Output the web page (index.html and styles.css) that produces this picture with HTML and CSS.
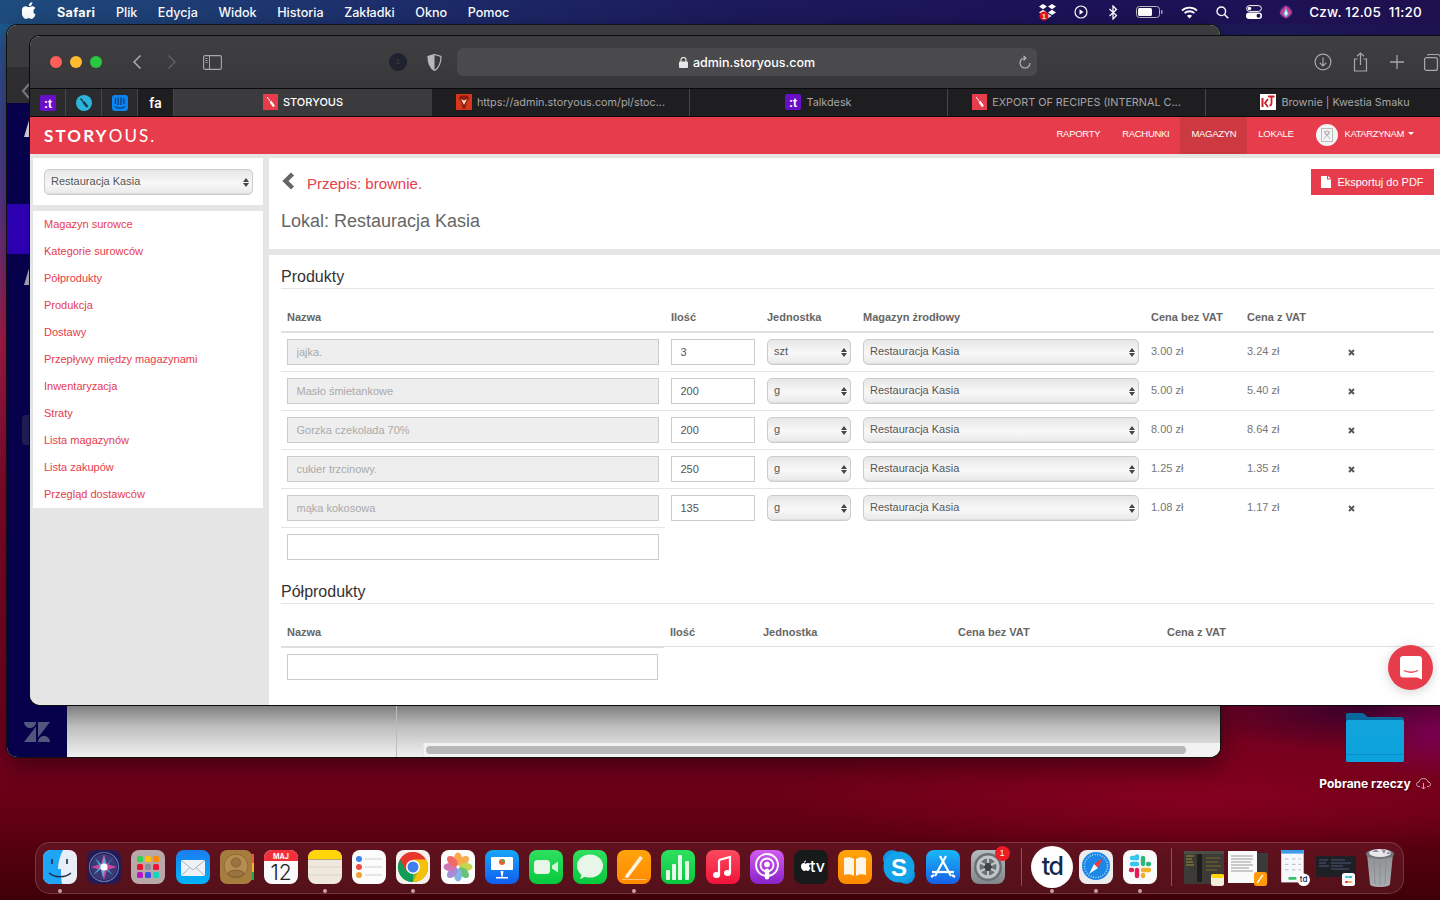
FILE: index.html
```html
<!DOCTYPE html>
<html lang="pl">
<head>
<meta charset="utf-8">
<title>Storyous</title>
<link rel="stylesheet" href="styles.css">
</head>
<body>
<svg class="defs" aria-hidden="true">
  <defs>
    <linearGradient id="gBlue" x1="0" y1="0" x2="0" y2="1"><stop offset="0" stop-color="#1b7df0"/><stop offset="1" stop-color="#00b4fb"/></linearGradient>
    <linearGradient id="gKey" x1="0" y1="0" x2="0" y2="1"><stop offset="0" stop-color="#19a6f8"/><stop offset="1" stop-color="#0f5ef0"/></linearGradient>
    <linearGradient id="gGreen" x1="0" y1="0" x2="0" y2="1"><stop offset="0" stop-color="#2fe05f"/><stop offset="1" stop-color="#06c83c"/></linearGradient>
    <linearGradient id="gOrange" x1="0" y1="0" x2="0" y2="1"><stop offset="0" stop-color="#ffa30c"/><stop offset="1" stop-color="#ff8a00"/></linearGradient>
    <linearGradient id="gRed" x1="0" y1="0" x2="0" y2="1"><stop offset="0" stop-color="#fc4a5e"/><stop offset="1" stop-color="#f2123a"/></linearGradient>
    <linearGradient id="gPod" x1="0" y1="0" x2="0" y2="1"><stop offset="0" stop-color="#d45bf3"/><stop offset="1" stop-color="#8a23c8"/></linearGradient>
    <linearGradient id="gGrey" x1="0" y1="0" x2="0" y2="1"><stop offset="0" stop-color="#b5bcc0"/><stop offset="1" stop-color="#80878b"/></linearGradient>
    <linearGradient id="gApp" x1="0" y1="0" x2="0" y2="1"><stop offset="0" stop-color="#18b8f5"/><stop offset="1" stop-color="#1760e8"/></linearGradient>
    <linearGradient id="gTrash" x1="0" y1="0" x2="0" y2="1"><stop offset="0" stop-color="#8d9194"/><stop offset="1" stop-color="#a9adb0"/></linearGradient>
    <linearGradient id="gFolder" x1="0" y1="0" x2="0" y2="1"><stop offset="0" stop-color="#13a5dc"/><stop offset="1" stop-color="#0ba2dd"/></linearGradient>
  </defs>
</svg>

<div class="desktop">
  <header class="menubar">
    <svg class="apple" width="14" height="17" viewBox="0 0 14 17"><path fill="#fff" d="M10.4 0c.1 1.1-.3 2.1-.9 2.9-.7.8-1.7 1.3-2.6 1.2-.1-1 .4-2.1 1-2.8C8.500.6 9.600.1 10.400 0zM13.500 12.500c-.4 1-.6 1.400-1.100 2.200-.7 1.100-1.700 2.300-2.900 2.300-1.100 0-1.400-.7-2.800-.7s-1.800.7-2.900.7c-1.200 0-2.100-1.200-2.800-2.200C-.9 11.900-1 8.300.200 6.400 1 5.100 2.300 4.300 3.600 4.300c1.300 0 2.200.8 3.300.8 1.100 0 1.700-.8 3.300-.8 1.100 0 2.400.6 3.200 1.700-2.800 1.600-2.400 5.400.1 6.500z"/></svg>
    <nav class="menu-items">
      <span class="menu-strong">Safari</span><span>Plik</span><span>Edycja</span><span>Widok</span><span>Historia</span><span>Zakładki</span><span>Okno</span><span>Pomoc</span>
    </nav>
    <div class="status">
      <svg class="st-dropbox" width="20" height="18" viewBox="0 0 20 18"><g fill="#fff"><path d="M5 1l4 2.600-4 2.600-4-2.600zM14 1l4 2.600-4 2.600-4-2.600zM5 6.800l4 2.600-4 2.600-4-2.600zM14 6.800l4 2.600-4 2.600-4-2.600zM9.500 10.500l4 2.600-4 2.400-4-2.400z"/></g><circle cx="6" cy="13" r="4.500" fill="#e8141c"/><text x="6" y="16" class="st-badge">1</text></svg>
      <svg class="st-play" width="14" height="14" viewBox="0 0 14 14"><circle cx="7" cy="7" r="6" fill="none" stroke="#fff" stroke-width="1.200"/><path d="M5.500 4.200l4 2.800-4 2.800z" fill="#fff"/></svg>
      <svg class="st-bt" width="10" height="15" viewBox="0 0 10 15"><path d="M1.500 4l7 6.500L5 14V1l3.500 3.500-7 6.500" fill="none" stroke="#fff" stroke-width="1.300"/></svg>
      <svg class="st-bat" width="27" height="12" viewBox="0 0 27 12"><rect x=".5" y=".5" width="23" height="11" rx="3" fill="none" stroke="#bbb"/><rect x="2" y="2" width="14" height="8" rx="1.500" fill="#fff"/><rect x="25" y="4" width="1.500" height="4" rx=".7" fill="#aaa"/></svg>
      <svg class="st-wifi" width="17" height="13" viewBox="0 0 17 13"><g fill="none" stroke="#fff" stroke-width="1.800"><path d="M1 4.600c4-4 11-4 15 0"/><path d="M3.600 7.200c2.600-2.600 7.200-2.600 9.800 0"/></g><path d="M8.500 12.500L5.900 9.700c1.500-1.300 3.700-1.300 5.200 0z" fill="#fff"/></svg>
      <svg class="st-search" width="13" height="13" viewBox="0 0 13 13"><circle cx="5.300" cy="5.300" r="4.300" fill="none" stroke="#fff" stroke-width="1.400"/><path d="M8.500 8.500l3.800 3.800" stroke="#fff" stroke-width="1.600"/></svg>
      <svg class="st-cc" width="16" height="14" viewBox="0 0 16 14"><rect x=".6" y=".6" width="14.800" height="5.800" rx="2.900" fill="none" stroke="#fff"/><circle cx="3.500" cy="3.500" r="1.800" fill="#fff"/><rect x="0" y="7.500" width="16" height="6.500" rx="3.200" fill="#fff"/><circle cx="12.500" cy="10.700" r="2" fill="#1c1458"/></svg>
      <svg class="st-siri" width="14" height="14" viewBox="0 0 14 14"><circle cx="7" cy="7" r="6.500" fill="#3a2a78"/><path d="M7 .5C10 3 12 5 13 8c-2 2-4 4-6 5.500C5 12 2 10 1 8c1-3 3-5 6-7.500z" fill="#c83c96"/><path d="M7 3l2.500 6-2.500 3-2.500-3z" fill="#6fe0ef"/><path d="M7 5.500l1 3-1 1.500-1-1.500z" fill="#fff"/></svg>
      <span class="clock">Czw. 12.05&nbsp; 11:20</span>
    </div>
  </header>

  <div class="back-window">
    <div class="back-top"></div>
    <div class="back-bar">
      <svg class="back-chev" width="10" height="16" viewBox="0 0 10 16"><path d="M8 1L2 8l6 7" fill="none" stroke="#77787a" stroke-width="2"/></svg>
    </div>
    <div class="back-body">
      <aside class="back-side">
        <span class="back-side-gap1"></span>
        <svg class="back-tri" width="6" height="20" viewBox="0 0 6 20"><path d="M6 0v20H0z" fill="#c8c8d0"/></svg>
        <span class="back-band"></span>
        <svg class="back-tri back-tri2" width="6" height="20" viewBox="0 0 6 20"><path d="M6 0v20H0z" fill="#9c9cac"/></svg>
        <span class="back-chip"></span>
        <svg class="zendesk" width="26" height="20" viewBox="0 0 26 20"><g fill="#51567f"><path d="M12 4.500V20H0z"/><path d="M14 15.500V0h12z"/><path d="M0 0h12c0 3.300-2.700 6-6 6s-6-2.700-6-6z"/><path d="M14 20c0-3.300 2.700-6 6-6s6 2.700 6 6z"/></g></svg>
      </aside>
      <div class="back-main">
        <div class="back-shade">
          <div class="back-pane-left"></div>
          <div class="back-pane-right">
            <div class="back-scroll"><span class="back-thumb"></span></div>
          </div>
        </div>
      </div>
    </div>
  </div>

  <div class="folder">
    <svg width="60" height="52" viewBox="0 0 60 52"><path d="M3 2h14c3 0 4 4 7 4h32c2 0 3 1 3 3v40c0 1.500-1 2-2 2H3c-1.500 0-2-1-2-2V4c0-1.500 1-2 2-2z" fill="#08679c"/><path d="M1 11c0-1 1-2 2-2h54c1 0 2 1 2 2v38c0 1-1 2-2 2H3c-1 0-2-1-2-2z" fill="url(#gFolder)"/><rect x="1" y="43" width="58" height="1" fill="#0a8cc4"/></svg>
    <div class="folder-label">Pobrane rzeczy
      <svg width="15" height="12" viewBox="0 0 15 12"><path d="M4 8.500H3C1.500 8.500.5 7.500.5 6.200S1.500 4 3 4c.5-2 2-3.500 4.500-3.500S11.500 2 12 4c1.500 0 2.500 1 2.500 2.200s-1 2.300-2.500 2.300h-1" fill="none" stroke="#c9a8b0"/><path d="M7.500 5v6M5.500 9l2 2 2-2" fill="none" stroke="#c9a8b0"/></svg>
    </div>
  </div>

  <main class="window">
    <div class="toolbar">
      <span class="light light-red"></span><span class="light light-yellow"></span><span class="light light-green"></span>
      <svg class="tb-back" width="10" height="16" viewBox="0 0 10 16"><path d="M8.500 1.500L2 8l6.500 6.500" fill="none" stroke="#b4b4b6" stroke-width="1.400"/></svg>
      <svg class="tb-fwd" width="10" height="16" viewBox="0 0 10 16"><path d="M1.500 1.500L8 8l-6.500 6.500" fill="none" stroke="#636365" stroke-width="1.400"/></svg>
      <svg class="tb-side" width="19" height="15" viewBox="0 0 19 15"><rect x=".6" y=".6" width="17.800" height="13.800" rx="1.500" fill="none" stroke="#a8a8aa" stroke-width="1.100"/><path d="M6.500 1v13" stroke="#a8a8aa"/><path d="M2.500 3.500h2M2.500 5.500h2M2.500 7.500h2" stroke="#a8a8aa"/></svg>
      <span class="tb-ext">1</span>
      <svg class="tb-shield" width="15" height="17" viewBox="0 0 15 17"><path d="M7.500.5L14 2.500c0 6-1.500 11-6.500 14C2.500 13.500 1 8.500 1 2.500z" fill="none" stroke="#b8b8ba" stroke-width="1.200"/><path d="M7.500.5L1 2.500c0 6 1.500 11 6.500 14z" fill="#b8b8ba"/></svg>
      <div class="address">
        <svg width="9" height="11" viewBox="0 0 9 11"><rect x="0" y="4.500" width="9" height="6.500" rx="1" fill="#e8e8e8"/><path d="M2 5V3a2.500 2.500 0 015 0v2" fill="none" stroke="#e8e8e8" stroke-width="1.200"/></svg>
        <span>admin.storyous.com</span>
        <svg class="reload" width="12" height="14" viewBox="0 0 12 14"><path d="M6 3a5 5 0 105 5" fill="none" stroke="#c0c0c2" stroke-width="1.100"/><path d="M4.500 .8L7 3 4.500 5.500" fill="none" stroke="#c0c0c2" stroke-width="1.100"/></svg>
      </div>
      <svg class="tb-dl" width="18" height="18" viewBox="0 0 18 18"><circle cx="9" cy="9" r="7.900" fill="none" stroke="#a8a8aa" stroke-width="1.200"/><path d="M9 4.500v8.500M5.800 9.800L9 13l3.200-3.200" fill="none" stroke="#a8a8aa" stroke-width="1.200"/></svg>
      <svg class="tb-share" width="15" height="20" viewBox="0 0 15 20"><path d="M4.500 7H1.500v12h12V7h-3" fill="none" stroke="#a8a8aa" stroke-width="1.200"/><path d="M7.500 13V1M4 4.300L7.500 1 11 4.300" fill="none" stroke="#a8a8aa" stroke-width="1.200"/></svg>
      <svg class="tb-plus" width="14" height="14" viewBox="0 0 14 14"><path d="M7 0v14M0 7h14" stroke="#a8a8aa" stroke-width="1.300"/></svg>
      <svg class="tb-tabs" width="17" height="17" viewBox="0 0 17 17"><rect x=".6" y="3.600" width="12.800" height="12.800" rx="2" fill="none" stroke="#a8a8aa" stroke-width="1.200"/><path d="M3.500 1.500c0-.5.500-1 1-1h9c1.500 0 3 1.500 3 3v9" fill="none" stroke="#a8a8aa" stroke-width="1.200"/></svg>
    </div>

    <div class="tabbar">
      <div class="pin">
        <svg width="16" height="16" viewBox="0 0 16 16"><rect width="16" height="16" rx="2" fill="#6a0fc8"/><text x="8" y="12.500" class="fav-t">:t</text></svg>
      </div>
      <div class="pin">
        <svg width="16" height="16" viewBox="0 0 16 16"><circle cx="8" cy="8" r="8" fill="#2db4dc"/><path d="M4.500 3.500l3 3.500" stroke="#12384a" stroke-width="1.200"/><path d="M7.500 7l4 5" stroke="#12384a" stroke-width="2.400"/></svg>
      </div>
      <div class="pin">
        <svg width="16" height="16" viewBox="0 0 16 16"><rect width="16" height="16" rx="3" fill="#0a84f0"/><path d="M3.500 3v6M6.200 2.500v7.500M9 2.500v7.500M11.800 3v6" stroke="#103a70" stroke-width="1.200"/><path d="M3 11.500c3 2 7 2 10 0" stroke="#103a70" stroke-width="1.200" fill="none"/></svg>
      </div>
      <div class="pin pin-text">fa</div>
      <div class="tab tab-active">
        <svg width="15" height="16" viewBox="0 0 15 16"><rect width="15" height="16" fill="#e63c4b"/><path d="M4 3l3.500 4.500" stroke="#fff" stroke-width="1"/><path d="M7.500 7.500l3.500 5" stroke="#fff" stroke-width="2.200"/></svg>
        <span>STORYOUS</span>
      </div>
      <div class="tab">
        <svg width="16" height="16" viewBox="0 0 16 16"><rect width="16" height="16" fill="#d6361a"/><path d="M4 1.500h8l1 3-2.500 4-1 6h-3l-1-6L3 4.500z" fill="#8e1a10"/><path d="M5 5l3 6 3-6-3 1.500z" fill="#f5ddc8"/></svg>
        <span>https://admin.storyous.com/pl/stoc...</span>
      </div>
      <div class="tab">
        <svg width="16" height="16" viewBox="0 0 16 16"><rect width="16" height="16" rx="2" fill="#6a0fc8"/><text x="8" y="12.500" class="fav-t">:t</text></svg>
        <span>Talkdesk</span>
      </div>
      <div class="tab">
        <svg width="15" height="16" viewBox="0 0 15 16"><rect width="15" height="16" fill="#e63c4b"/><path d="M4 3l3.500 4.500" stroke="#fff" stroke-width="1"/><path d="M7.500 7.500l3.500 5" stroke="#fff" stroke-width="2.200"/></svg>
        <span>EXPORT OF RECIPES (INTERNAL C...</span>
      </div>
      <div class="tab tab-last">
        <svg width="16" height="16" viewBox="0 0 16 16"><rect width="16" height="16" fill="#fff"/><path d="M2.500 4v9" stroke="#c8202c" stroke-width="2"/><path d="M8 5L5 9l3 4" stroke="#c8202c" stroke-width="1.800" fill="none"/><path d="M8 2.500h6.500M11.500 2.500V9c0 1.500-1 2.500-2 2.500" stroke="#c8202c" stroke-width="1.800" fill="none"/></svg>
        <span>Brownie | Kwestia Smaku</span>
      </div>
    </div>

    <div class="appbar">
      <div class="logo"><b>STORY</b>OUS.</div>
      <nav class="appnav">
        <a>RAPORTY</a><a>RACHUNKI</a><a class="is-active">MAGAZYN</a><a>LOKALE</a>
        <span class="user">
          <span class="avatar"><svg width="12" height="14" viewBox="0 0 12 14"><rect x=".5" y=".5" width="11" height="13" fill="none" stroke="#bbb"/><path d="M3 3l6 8M9 3l-6 8" stroke="#bbb"/><circle cx="6" cy="5" r="2" fill="none" stroke="#aaa"/></svg></span>
          KATARZYNAM<span class="caret"></span>
        </span>
      </nav>
    </div>

    <div class="app">
      <aside class="sidebar">
        <div class="panel side-select">
          <div class="sel sel-wide"><select><option>Restauracja Kasia</option></select></div>
        </div>
        <ul class="panel side-menu">
          <li>Magazyn surowce</li>
          <li>Kategorie surowców</li>
          <li>Półprodukty</li>
          <li>Produkcja</li>
          <li>Dostawy</li>
          <li>Przepływy między magazynami</li>
          <li>Inwentaryzacja</li>
          <li>Straty</li>
          <li>Lista magazynów</li>
          <li>Lista zakupów</li>
          <li>Przegląd dostawców</li>
        </ul>
      </aside>

      <div class="content">
        <section class="panel head-panel">
          <div class="head-row">
            <svg class="back-arrow" width="13" height="18" viewBox="0 0 13 18"><path d="M10.500 2L3.500 9l7 7" fill="none" stroke="#666" stroke-width="4.400"/></svg>
            <h1 class="recipe">Przepis: brownie.</h1>
            <a class="pdf">
              <svg width="10" height="12" viewBox="0 0 10 12"><path d="M0 0h6v3.500h4V12H0zM7 0l3 2.500H7z" fill="#fff"/></svg>
              Eksportuj do PDF
            </a>
          </div>
          <h2 class="place">Lokal: Restauracja Kasia</h2>
        </section>

        <section class="panel body-panel">
          <h3 class="sec-title">Produkty</h3>
          <table class="grid grid-products">
            <colgroup><col class="c-name"><col class="c-s"><col class="c-s"><col class="c-store"><col class="c-s"><col class="c-s"><col></colgroup>
            <thead>
              <tr><th>Nazwa</th><th>Ilość</th><th>Jednostka</th><th>Magazyn żrodłowy</th><th>Cena bez VAT</th><th>Cena z VAT</th><th></th></tr>
            </thead>
            <tbody>
              <tr>
                <td><input class="field" disabled value="jajka."></td><td><input class="field" value="3"></td>
                <td><div class="sel"><select><option>szt</option></select></div></td>
                <td><div class="sel"><select><option>Restauracja Kasia</option></select></div></td>
                <td class="num">3.00 zł</td><td class="num">3.24 zł</td>
                <td><svg class="rm" width="7" height="7" viewBox="0 0 7 7"><path d="M1 1l5 5M6 1L1 6" stroke="#555" stroke-width="1.900"/></svg></td>
              </tr>
              <tr>
                <td><input class="field" disabled value="Masło śmietankowe"></td><td><input class="field" value="200"></td>
                <td><div class="sel"><select><option>g</option></select></div></td>
                <td><div class="sel"><select><option>Restauracja Kasia</option></select></div></td>
                <td class="num">5.00 zł</td><td class="num">5.40 zł</td>
                <td><svg class="rm" width="7" height="7" viewBox="0 0 7 7"><path d="M1 1l5 5M6 1L1 6" stroke="#555" stroke-width="1.900"/></svg></td>
              </tr>
              <tr>
                <td><input class="field" disabled value="Gorzka czekolada 70%"></td><td><input class="field" value="200"></td>
                <td><div class="sel"><select><option>g</option></select></div></td>
                <td><div class="sel"><select><option>Restauracja Kasia</option></select></div></td>
                <td class="num">8.00 zł</td><td class="num">8.64 zł</td>
                <td><svg class="rm" width="7" height="7" viewBox="0 0 7 7"><path d="M1 1l5 5M6 1L1 6" stroke="#555" stroke-width="1.900"/></svg></td>
              </tr>
              <tr>
                <td><input class="field" disabled value="cukier trzcinowy."></td><td><input class="field" value="250"></td>
                <td><div class="sel"><select><option>g</option></select></div></td>
                <td><div class="sel"><select><option>Restauracja Kasia</option></select></div></td>
                <td class="num">1.25 zł</td><td class="num">1.35 zł</td>
                <td><svg class="rm" width="7" height="7" viewBox="0 0 7 7"><path d="M1 1l5 5M6 1L1 6" stroke="#555" stroke-width="1.900"/></svg></td>
              </tr>
              <tr class="last-row">
                <td><input class="field" disabled value="mąka kokosowa"></td><td><input class="field" value="135"></td>
                <td><div class="sel"><select><option>g</option></select></div></td>
                <td><div class="sel"><select><option>Restauracja Kasia</option></select></div></td>
                <td class="num">1.08 zł</td><td class="num">1.17 zł</td>
                <td><svg class="rm" width="7" height="7" viewBox="0 0 7 7"><path d="M1 1l5 5M6 1L1 6" stroke="#555" stroke-width="1.900"/></svg></td>
              </tr>
              <tr class="add-row">
                <td><input class="field"></td><td colspan="6" class="no-line"></td>
              </tr>
            </tbody>
          </table>

          <h3 class="sec-title sec-title-2">Półprodukty</h3>
          <table class="grid grid-semi">
            <colgroup><col class="d-name"><col class="d-qty"><col class="d-unit"><col class="d-net"><col></colgroup>
            <thead>
              <tr><th>Nazwa</th><th>Ilość</th><th>Jednostka</th><th>Cena bez VAT</th><th>Cena z VAT</th></tr>
            </thead>
            <tbody>
              <tr class="add-row"><td><input class="field"></td><td colspan="4" class="no-line"></td></tr>
            </tbody>
          </table>
        </section>
      </div>
    </div>

    <button class="chat" aria-label="Czat">
      <svg width="22" height="24" viewBox="0 0 22 24"><path d="M3 0h16c1.700 0 3 1.300 3 3v20.500l-5-2H3c-1.700 0-3-1.300-3-3V3c0-1.700 1.300-3 3-3z" fill="#fff"/><path d="M4 14.500c4 2.300 10 2.300 14 0" fill="none" stroke="#e63c4b" stroke-width="1.300"/></svg>
    </button>
  </main>

  <footer class="dock">
    <div class="dock-item has-dot">
      <svg viewBox="0 0 34 34"><rect width="34" height="34" rx="8" fill="#e8eef7"/><path d="M8 0h12c-3 6-5 12-5 19h3c0 5 0 10 1 15H8c-4.400 0-8-3.600-8-8V8c0-4.400 3.600-8 8-8z" fill="#1ea5f6"/><path d="M9 9v5M24 9v5" stroke="#1c2c4c" stroke-width="1.600"/><path d="M6 23c6 5 16 5 22 0" fill="none" stroke="#1c2c4c" stroke-width="1.400"/></svg>
    </div>
    <div class="dock-item">
      <svg viewBox="0 0 34 34"><rect width="34" height="34" rx="8" fill="#251a55"/><circle cx="17" cy="17" r="14.500" fill="none" stroke="#5d74a8" stroke-width="1.200"/><circle cx="17" cy="17" r="13" fill="#3a3a78"/><path d="M17 4l3 10 10 3-10 3-3 10-3-10-10-3 10-3z" fill="#c846a0"/><path d="M8 8l7 7 2-9 2 9 7-7-7 9 7 8-8-6-2 9-2-9-8 6 7-8z" fill="#4ac6e0" opacity=".8"/><circle cx="17" cy="17" r="3.500" fill="#fff"/></svg>
    </div>
    <div class="dock-item">
      <svg viewBox="0 0 34 34"><rect width="34" height="34" rx="8" fill="#b9a8aa"/><g><rect x="6" y="6" width="6" height="6" rx="1.500" fill="#30d158"/><rect x="14" y="6" width="6" height="6" rx="1.500" fill="#ffc300"/><rect x="22" y="6" width="6" height="6" rx="1.500" fill="#ff8a00"/><rect x="6" y="14" width="6" height="6" rx="1.500" fill="#e8142c"/><rect x="14" y="14" width="6" height="6" rx="1.500" fill="#8c9198"/><rect x="22" y="14" width="6" height="6" rx="1.500" fill="#f2123a"/><rect x="6" y="22" width="6" height="6" rx="1.500" fill="#b318c8"/><rect x="14" y="22" width="6" height="6" rx="1.500" fill="#3a50e8"/><rect x="22" y="22" width="6" height="6" rx="1.500" fill="#10d8c0"/></g></svg>
    </div>
    <div class="dock-item">
      <svg viewBox="0 0 34 34"><rect width="34" height="34" rx="8" fill="url(#gBlue)"/><rect x="5" y="10" width="24" height="16" rx="1.500" fill="#eef2f6"/><path d="M5.500 10.500L17 20l11.500-9.500M5.500 25.500l8.500-8M28.500 25.500l-8.500-8" fill="none" stroke="#a8b4bd"/></svg>
    </div>
    <div class="dock-item">
      <svg viewBox="0 0 34 34"><rect x="30" y="4" width="4" height="9" fill="#e05c3a"/><rect x="30" y="13" width="4" height="9" fill="#f0b030"/><rect x="30" y="22" width="4" height="8" fill="#2ba04c"/><rect width="32" height="34" rx="7" fill="#a67c3f"/><circle cx="16" cy="16" r="12" fill="#b58b50" stroke="#8d6a34"/><circle cx="16" cy="12.500" r="4.500" fill="#9a7440" stroke="#7f5e2d"/><path d="M7.500 24c2-5 15-5 17 0-4 4-13 4-17 0z" fill="#9a7440" stroke="#7f5e2d"/></svg>
    </div>
    <div class="dock-item">
      <svg viewBox="0 0 34 34"><rect width="34" height="34" rx="8" fill="#fafafa"/><path d="M0 11V8c0-4.400 3.600-8 8-8h18c4.400 0 8 3.600 8 8v3z" fill="#f2303c"/><text x="17" y="8.500" class="cal-mon">MAJ</text><text x="17" y="30" class="cal-day">12</text></svg>
    </div>
    <div class="dock-item has-dot">
      <svg viewBox="0 0 34 34"><rect width="34" height="34" rx="8" fill="#eee9dc"/><path d="M0 9V8c0-4.400 3.600-8 8-8h18c4.400 0 8 3.600 8 8v1z" fill="#ffd60a"/><path d="M0 9.500h34" stroke="#b8a878"/><path d="M0 17h34M0 25h34" stroke="#dbd5c7"/></svg>
    </div>
    <div class="dock-item">
      <svg viewBox="0 0 34 34"><rect width="34" height="34" rx="8" fill="#fcfcfc"/><circle cx="7" cy="9" r="3" fill="#3c82f0"/><circle cx="7" cy="17" r="3" fill="#ee4a44"/><circle cx="7" cy="25" r="3" fill="#f2a030"/><path d="M13 9h17M13 17h17M13 25h17" stroke="#d0d0d0"/></svg>
    </div>
    <div class="dock-item has-dot">
      <svg viewBox="0 0 34 34"><rect width="34" height="34" rx="8" fill="#f5f2ee"/><circle cx="17" cy="17" r="15" fill="#e8372c"/><path d="M17 17L4 24.500A15 15 0 0017 32z" fill="#0f9d58"/><path d="M17 17v15a15 15 0 0013-22.500z" fill="#8fb020"/><path d="M17 17h13A15 15 0 0017 2 15 15 0 004 9.500z" fill="#e8372c"/><path d="M30 9.500H17l6 10-6 12.500a15 15 0 0013-22.500z" fill="#f4c20d"/><path d="M4 9.500l7 13L17 32A15 15 0 014 9.500z" fill="#0f9d58"/><circle cx="17" cy="17" r="7" fill="#fff"/><circle cx="17" cy="17" r="5.500" fill="#3d7ff0"/></svg>
    </div>
    <div class="dock-item">
      <svg viewBox="0 0 34 34"><rect width="34" height="34" rx="8" fill="#fcfcfc"/><g opacity=".85"><ellipse cx="17" cy="9" rx="4" ry="6.500" fill="#ff9a2a"/><ellipse cx="17" cy="9" rx="4" ry="6.500" fill="#f4a030" transform="rotate(45 17 17)"/><ellipse cx="17" cy="9" rx="4" ry="6.500" fill="#b8d030" transform="rotate(90 17 17)"/><ellipse cx="17" cy="9" rx="4" ry="6.500" fill="#50b860" transform="rotate(135 17 17)"/><ellipse cx="17" cy="9" rx="4" ry="6.500" fill="#6aa8e0" transform="rotate(180 17 17)"/><ellipse cx="17" cy="9" rx="4" ry="6.500" fill="#9878d0" transform="rotate(225 17 17)"/><ellipse cx="17" cy="9" rx="4" ry="6.500" fill="#c860a8" transform="rotate(270 17 17)"/><ellipse cx="17" cy="9" rx="4" ry="6.500" fill="#f05050" transform="rotate(315 17 17)"/></g></svg>
    </div>
    <div class="dock-item">
      <svg viewBox="0 0 34 34"><rect width="34" height="34" rx="8" fill="url(#gKey)"/><rect x="6" y="7" width="22" height="13" rx="1" fill="#fff"/><circle cx="17" cy="12" r="3" fill="#f05a3a"/><path d="M17 12v-3a3 3 0 013 3z" fill="#4cae4c"/><path d="M15.500 21h3l-1 6h-1z" fill="#fff"/><rect x="11" y="27" width="12" height="1.500" fill="#fff"/></svg>
    </div>
    <div class="dock-item">
      <svg viewBox="0 0 34 34"><rect width="34" height="34" rx="8" fill="url(#gGreen)"/><rect x="5" y="10" width="16" height="14" rx="3.500" fill="#e8f6ea"/><path d="M23 15.500l6-4v11l-6-4z" fill="#d6f0da"/></svg>
    </div>
    <div class="dock-item">
      <svg viewBox="0 0 34 34"><rect width="34" height="34" rx="8" fill="url(#gGreen)"/><ellipse cx="17" cy="16" rx="13" ry="11.500" fill="#e8f6ea"/><path d="M9 24l-2 5 7-3z" fill="#e8f6ea"/></svg>
    </div>
    <div class="dock-item has-dot">
      <svg viewBox="0 0 34 34"><rect width="34" height="34" rx="8" fill="url(#gOrange)"/><path d="M8 26L23 6l3 2-15 20z" fill="#fff2dc"/><path d="M8 26l-.5 1.500L11 28" fill="#fff2dc"/><rect x="5" y="29" width="24" height="1" fill="#ffc477"/></svg>
    </div>
    <div class="dock-item">
      <svg viewBox="0 0 34 34"><rect width="34" height="34" rx="8" fill="url(#gGreen)"/><g fill="#e8f8ea"><rect x="5" y="20" width="4" height="10" rx="1"/><rect x="11" y="14" width="4" height="16" rx="1"/><rect x="17" y="5" width="4" height="25" rx="1"/><rect x="24" y="11" width="4" height="19" rx="1"/></g></svg>
    </div>
    <div class="dock-item">
      <svg viewBox="0 0 34 34"><rect width="34" height="34" rx="8" fill="url(#gRed)"/><path d="M13 10l11-3v16" fill="none" stroke="#fff" stroke-width="2.200"/><path d="M13 10v15" stroke="#fff" stroke-width="2.200"/><ellipse cx="10.500" cy="25" rx="3.500" ry="3" fill="#fff"/><ellipse cx="21.500" cy="23" rx="3.500" ry="3" fill="#fff"/></svg>
    </div>
    <div class="dock-item">
      <svg viewBox="0 0 34 34"><rect width="34" height="34" rx="8" fill="url(#gPod)"/><circle cx="17" cy="15" r="11" fill="none" stroke="#fff" stroke-width="1.800"/><circle cx="17" cy="15" r="6.500" fill="none" stroke="#fff" stroke-width="1.800"/><circle cx="17" cy="14.500" r="2.800" fill="#fff"/><rect x="14.800" y="18.500" width="4.400" height="11" rx="2.200" fill="#fff"/></svg>
    </div>
    <div class="dock-item">
      <svg viewBox="0 0 34 34"><rect width="34" height="34" rx="8" fill="#161a1a"/><path d="M9.500 13c.9 0 1.700.7 2.300.7.700 0 1.300-.7 2.400-.7.800 0 1.500.4 2 1-1.600 1-1.400 3.100.2 3.900-.5 1.300-1.500 3.100-2.500 3.100-.7 0-1-.5-1.900-.5s-1.200.5-1.900.5C8.800 21 7 18.600 7 16.300c0-2 1.200-3.300 2.500-3.300zM12 10.500c.1.900-.7 2.200-2 2.200-.1-1.100.9-2.200 2-2.200z" fill="#fff"/><text x="23.500" y="21.500" class="tv">tv</text></svg>
    </div>
    <div class="dock-item">
      <svg viewBox="0 0 34 34"><rect width="34" height="34" rx="8" fill="url(#gOrange)"/><path d="M16 9c-3-2-7-2-10-1v17c3-1 7-1 10 1zM18 9c3-2 7-2 10-1v17c-3-1-7-1-10 1z" fill="#fdf5e8"/></svg>
    </div>
    <div class="dock-item">
      <svg viewBox="0 0 34 34"><circle cx="10" cy="9" r="9" fill="#1096e0"/><circle cx="24" cy="25" r="9" fill="#1096e0"/><circle cx="17" cy="17" r="15.500" fill="#13a3e8"/><text x="17" y="25.500" class="skype">S</text></svg>
    </div>
    <div class="dock-item">
      <svg viewBox="0 0 34 34"><rect width="34" height="34" rx="8" fill="url(#gApp)"/><g fill="none" stroke="#fff" stroke-width="2.200"><path d="M20 6L9 26"/><path d="M14 6l11 20"/><path d="M6 22h22"/><path d="M5 27l3-2M29 27l-3-2"/></g></svg>
    </div>
    <div class="dock-item dock-badge">
      <svg viewBox="0 0 34 34"><rect width="34" height="34" rx="8" fill="url(#gGrey)"/><circle cx="17" cy="17" r="14" fill="#6a7074"/><circle cx="17" cy="17" r="10" fill="none" stroke="#c0c5c8" stroke-width="3"/><circle cx="17" cy="17" r="4" fill="#3e4346"/><path d="M17 7v6M8 12l6 3M26 12l-6 3M17 27v-6M8 22l6-3M26 22l-6-3" stroke="#c0c5c8" stroke-width="2"/></svg>
      <span class="badge">1</span>
    </div>
    <span class="dock-sep"></span>
    <div class="dock-item dock-td has-dot">
      <svg viewBox="0 0 42 42"><circle cx="21" cy="21" r="21" fill="#fff"/><text x="21" y="29" class="td">td</text></svg>
    </div>
    <div class="dock-item has-dot">
      <svg viewBox="0 0 34 34"><rect width="34" height="34" rx="8" fill="#ececec"/><circle cx="17" cy="16" r="14" fill="#1b88e8"/><circle cx="17" cy="16" r="11.500" fill="none" stroke="#a8d4f6" stroke-width="1.600" stroke-dasharray="1 1.500"/><path d="M24 8l-9 6 4 4z" fill="#f23c3c"/><path d="M10 24l9-6-4-4z" fill="#f4f4f4"/></svg>
    </div>
    <div class="dock-item has-dot">
      <svg viewBox="0 0 34 34"><rect width="34" height="34" rx="8" fill="#fafafa"/><g stroke-width="4.400" stroke-linecap="round" fill="none"><path d="M14 8h-5" stroke="#36c5f0"/><path d="M14 8V6.500" stroke="#36c5f0"/><path d="M20 14V8" stroke="#2eb67d"/><path d="M26 14h-1" stroke="#2eb67d"/><path d="M20 20h6" stroke="#ecb22e"/><path d="M20 26v-1" stroke="#ecb22e"/><path d="M14 20v6" stroke="#e01e5a"/><path d="M8 20h1" stroke="#e01e5a"/><path d="M9 14h5" stroke="#36c5f0"/></g></svg>
    </div>
    <span class="dock-sep dock-sep2"></span>
    <div class="dock-item dock-thumb">
      <svg viewBox="0 0 40 36"><rect y="1" width="40" height="33" fill="#3c3b38"/><rect width="40" height="3" y="1" fill="#4e4c46"/><path d="M2 6h8M2 9h6M2 12h7M2 15h8" stroke="#a09034"/><rect x="13" y="4" width="5" height="28" fill="#1f1e1d"/><path d="M22 8h14M22 12h12M22 16h15M22 20h11" stroke="#7a6a24"/><rect x="27" y="24" width="13" height="12" rx="2.500" fill="#f2edd8"/><rect x="27" y="24" width="13" height="4" rx="2" fill="#ffd60a"/></svg>
    </div>
    <div class="dock-item dock-thumb">
      <svg viewBox="0 0 40 36"><rect y="3" width="40" height="30" fill="#3a3a3a"/><rect y="1" width="29" height="32" fill="#fafafa"/><path d="M3 6h22M3 9h22M3 12h20M3 15h22M3 18h18M3 21h22" stroke="#9a9a9a"/><rect x="26" y="22" width="13" height="14" rx="2.500" fill="#ff9a0a"/><path d="M29 33l6-8" stroke="#fff" stroke-width="1.300"/></svg>
    </div>
    <div class="dock-item dock-thumb">
      <svg viewBox="0 0 40 40"><rect x="8" y="0" width="25" height="36" fill="#f6f8fb"/><rect x="8" y="0" width="25" height="4" fill="#3a9ce8"/><path d="M12 10h4M20 10h4M27 10h3M12 16h4M20 16h4M27 16h3M12 22h4M20 22h4M27 22h3" stroke="#b4b8be"/><rect x="16" y="30" width="9" height="3" rx="1" fill="#35c06a"/><circle cx="33" cy="33" r="7" fill="#fff"/><text x="33" y="36" class="td-small">td</text></svg>
    </div>
    <div class="dock-item dock-thumb">
      <svg viewBox="0 0 40 36"><rect y="6" width="40" height="21" fill="#1e2026"/><path d="M3 10h9M3 13h7M3 16h10M15 10h14M15 13h20M15 16h12M15 19h18" stroke="#4a5a78"/><rect x="26" y="23" width="13" height="13" rx="2.500" fill="#fafafa"/><g stroke-width="2" stroke-linecap="round"><path d="M30 27h2" stroke="#36c5f0"/><path d="M34 27h1" stroke="#2eb67d"/><path d="M30 32h1" stroke="#e01e5a"/><path d="M33 32h2" stroke="#ecb22e"/></g></svg>
    </div>
    <div class="dock-item dock-trash">
      <svg viewBox="0 0 34 42"><path d="M4 8h26l-3 30c0 2-4 3-10 3s-10-1-10-3z" fill="url(#gTrash)"/><ellipse cx="17" cy="8" rx="14" ry="5" fill="#70757a"/><ellipse cx="17" cy="7" rx="11" ry="4" fill="#e8e8e8"/><path d="M9 6l4-3 3 3zM18 3l5 1-2 4zM23 8l3-3 1 3z" fill="#9c88a8"/><path d="M11 14l1 24M17 14v25M23 14l-1 24" stroke="#8a8e92"/></svg>
    </div>
  </footer>
</div>
</body>
</html>
```

FILE: styles.css
```css
* { box-sizing: border-box; }
html, body { margin: 0; padding: 0; height: 100%; }
body { width: 1440px; height: 900px; overflow: hidden; font-family: "Liberation Sans", Arial, sans-serif; }
.defs { position: absolute; width: 0; height: 0; }

.desktop {
  position: relative; width: 1440px; height: 900px; overflow: hidden;
  display: flex; flex-direction: column;
  background:
    linear-gradient(90deg, #1d5a8e 0, #1c2a6c 40%, #1c1350 100%) 0 0 / 100% 37px no-repeat,
    radial-gradient(ellipse 90px 45px at 1440px 735px, #7a0052 0, rgba(122,0,82,0) 100%),
    radial-gradient(ellipse 200px 45px at 1370px 706px, #35002c 0, rgba(53,0,44,0) 100%),
    radial-gradient(ellipse 420px 60px at 1200px 795px, #850020 0, rgba(133,0,32,0) 100%),
    linear-gradient(180deg, #1f5c92 0, #59398f 200px, #ae1d50 340px, #8a0a30 480px, #72001c 760px, #660014 810px, #3f0008 900px);
}

/* menu bar */
.menubar {
  height: 24px; flex: none; display: flex; align-items: center; color: #fff;
  font-family: Inter, "Liberation Sans", sans-serif; font-size: 12.600px; font-weight: 500;
  background: linear-gradient(90deg, #1f4c7e 0, #1d2f6c 25%, #1c1a5c 50%, #1c1258 75%, #1f1150 100%);
  padding-left: 22px;
}
.apple { flex: none; margin-top: -3px; }
.menu-items { display: flex; gap: 20.500px; margin-left: 21px; }
.menu-strong { font-weight: 700; letter-spacing: .35px; }
.status { margin-left: auto; display: flex; align-items: center; padding-right: 18px; }
.status svg { flex: none; display: block; }
.st-dropbox { margin-right: 16px; }
.st-play { margin-right: 20px; }
.st-bt { margin-right: 18px; }
.st-bat { margin-right: 18px; }
.st-wifi { margin-right: 18px; }
.st-search { margin-right: 17px; }
.st-cc { margin-right: 17px; }
.st-siri { margin-right: 16px; }
.st-badge { font: 700 7px "Liberation Sans", sans-serif; fill: #fff; text-anchor: middle; }
.clock { white-space: nowrap; font-size: 13.500px; letter-spacing: .2px; }

/* window behind */
.back-window {
  position: absolute; left: 7px; top: 25px; width: 1213px; height: 732px;
  border-radius: 10px; overflow: hidden; display: flex; flex-direction: column;
  box-shadow: 0 0 0 1px #111, 0 8px 26px rgba(0,0,0,.45); background: #fff;
}
.back-top { height: 42px; flex: none; background: #3b3b3d; }
.back-bar { height: 36px; flex: none; background: #2e2e30; padding: 16px 0 0 14px; }
.back-chev { display: block; }
.back-body { flex: 1; display: flex; min-height: 0; }
.back-side {
  width: 60px; flex: none; background: #07004a; display: flex; flex-direction: column; align-items: flex-start;
}
.back-side-gap1 { height: 14px; flex: none; }
.back-tri { display: block; flex: none; margin-left: 17px; }
.back-band { width: 60px; height: 50px; flex: none; background: #2c00b0; margin-top: 67px; }
.back-tri2 { margin-top: 11px; }
.back-chip { width: 14px; height: 30px; margin: 130px 0 0 15px; border-radius: 4px; background: #1e1c52; flex: none; }
.zendesk { display: block; margin: auto 0 15px 17px; flex: none; }
.back-main { flex: 1; display: flex; flex-direction: column; justify-content: flex-end; }
.back-shade { height: 51px; display: flex; background: linear-gradient(180deg, #7f7f7f 0, #bdbdbd 40%, #f0f0f0 100%); }
.back-pane-left { width: 330px; flex: none; border-right: 1px solid #bcbcbc; }
.back-pane-right { flex: 1; display: flex; flex-direction: column; justify-content: flex-end; padding-left: 26px; }
.back-scroll { height: 15px; border-top: 1px solid #d8d8d8; border-left: 1px solid #e4e4e4; background: #f2f2f2; padding: 3px 0 0 2px; }
.back-thumb { display: block; width: 760px; height: 8px; border-radius: 4px; background: #b8b8b8; }

/* desktop folder */
.folder { position: absolute; left: 1317px; top: 711px; width: 116px; display: flex; flex-direction: column; align-items: center; }
.folder svg { display: block; }
.folder-label { margin-top: 13px; color: #fff; font: 700 12px Inter, "Liberation Sans", sans-serif; white-space: nowrap; display: flex; align-items: center; gap: 5px; text-shadow: 0 1px 2px rgba(0,0,0,.5); }

/* front window */
.window {
  position: absolute; left: 30px; top: 36px; width: 1430px; height: 669px;
  border-radius: 10px; overflow: hidden; background: #e5e5e5; display: flex; flex-direction: column;
  box-shadow: 0 0 0 1px #0c0c0c;
}
.toolbar {
  height: 52px; flex: none; display: flex; align-items: center; padding: 0 0 0 20px;
  background: linear-gradient(180deg, #3f3f41, #38383a);
}
.toolbar svg { display: block; flex: none; }
.light { width: 12px; height: 12px; border-radius: 50%; margin-right: 8px; flex: none; }
.light-red { background: #ff5f57; }
.light-yellow { background: #febc2e; }
.light-green { background: #28c840; }
.tb-back { margin-left: 22px; }
.tb-fwd { margin-left: 25px; }
.tb-side { margin-left: 26px; }
.tb-ext { width: 18px; height: 18px; border-radius: 50%; background: #20232f; color: #3a3e4c; font-size: 8px; line-height: 18px; text-align: center; margin-left: 167px; flex: none; }
.tb-shield { margin-left: 20px; }
.address {
  width: 580px; height: 28px; flex: none; margin-left: 15px; border-radius: 6px; background: #4a494b;
  display: flex; align-items: center; justify-content: center; gap: 5px; position: relative;
  font: 500 12.500px Inter, "Liberation Sans", sans-serif; color: #fff;
}
.reload { position: absolute; right: 6px; top: 7px; }
.tb-dl { margin-left: 277px; }
.tb-share { margin-left: 21px; }
.tb-plus { margin-left: 22px; }
.tb-tabs { margin-left: 20px; }

.tabbar { height: 29px; flex: none; display: flex; background: #1e1d1f; border-top: 1px solid #0a0a0a; border-bottom: 1px solid #0a0a0a; }
.tabbar svg { display: block; flex: none; }
.pin { width: 36px; flex: none; display: flex; align-items: center; justify-content: center; border-right: 1px solid #47474a; background: #2b2b2d; }
.pin:nth-child(4) { background: #1e1d1f; }
.pin-text { color: #fff; font: 600 13px Inter, "Liberation Sans", sans-serif; }
.fav-t { font: 700 12px "Liberation Sans", sans-serif; fill: #fff; text-anchor: middle; }
.tab {
  width: 258px; flex: none; display: flex; align-items: center; justify-content: center; gap: 5px; padding-bottom: 1px;
  font: 400 10.800px Inter, "Liberation Sans", sans-serif; color: #a6a6a8; border-right: 1px solid #47474a; white-space: nowrap;
}
.tab-active { background: #3b3b3d; color: #fff; border-right: 0; font-weight: 500; font-size: 11px; }
.tab-last { border-right: 0; }

.appbar { height: 37px; flex: none; display: flex; align-items: stretch; background: #e63c4b; color: #fff; }
.logo { margin: 0 0 1px 14px; font: 400 17px Lato, "Liberation Sans", sans-serif; letter-spacing: 2.100px; align-self: center; }
.logo b { font-weight: 700; }
.appnav { margin-left: auto; display: flex; align-items: stretch; font: 400 9.500px "Liberation Sans", sans-serif; padding-right: 46px; }
.appnav a { padding: 0 11px 4px; display: flex; align-items: center; letter-spacing: -.3px; }
.appnav .is-active { background: #cc3941; }
.user { display: flex; align-items: center; margin-left: 12px; letter-spacing: -.4px; padding-bottom: 4px; }
.avatar { width: 22px; height: 22px; border-radius: 50%; background: #f4f4f4; display: flex; align-items: center; justify-content: center; margin: 3px 6px 0 0; }
.caret { width: 0; height: 0; margin-left: 4px; border-left: 3px solid transparent; border-right: 3px solid transparent; border-top: 3px solid #fff; }

.app { flex: 1; min-height: 0; display: flex; background: #e5e5e5; }
.panel { background: #fff; }

.sidebar { width: 239px; flex: none; padding: 4px 6px 0 3px; display: flex; flex-direction: column; gap: 6px; }
.side-select { height: 47px; padding: 11px 10px 0 11px; }
.side-menu { margin: 0; padding: 0 0 1px 11px; list-style: none; height: 297px; color: #e63c4b; font-size: 11px; }
.side-menu li { height: 27px; line-height: 27px; }

.sel { position: relative; height: 26px; }
.sel-wide { height: 26px; }
.sel select {
  appearance: none; -webkit-appearance: none; width: 100%; height: 100%; display: block; margin: 0;
  border: 1px solid #ccc; border-radius: 5px; padding: 0 14px 2px 6px;
  font: 11px "Liberation Sans", sans-serif; color: #555;
  background: linear-gradient(180deg, #e6e6e6 0, #f8f8f8 55%, #e9e9e9 100%);
  box-shadow: inset 0 -1px 1px rgba(0,0,0,.05);
}
.sel::before, .sel::after {
  content: ""; position: absolute; right: 4.500px; width: 0; height: 0; pointer-events: none;
  border-left: 3px solid transparent; border-right: 3px solid transparent;
}
.sel::before { top: 8.500px; border-bottom: 4px solid #444; }
.sel::after { top: 14px; border-top: 4px solid #444; }

.content { flex: 1; min-width: 0; padding-top: 4px; display: flex; flex-direction: column; gap: 6px; }
.head-panel { height: 91px; flex: none; padding: 11px 26px 0 12px; }
.head-row { display: flex; align-items: flex-start; height: 30px; }
.back-arrow { display: block; flex: none; margin: 3px 0 0 1px; }
.recipe { margin: 6px 0 0 12px; font-size: 15px; line-height: 17px; font-weight: 400; color: #e63c4b; }
.pdf {
  margin-left: auto; width: 123px; height: 26px; background: #e63c4b; color: #fff; font-size: 11px;
  display: flex; align-items: center; justify-content: center; gap: 6px;
}
.pdf svg { display: block; }
.place { margin: 11px 0 0; font-size: 18px; line-height: 22px; font-weight: 400; color: #666; }

.body-panel { flex: 1; min-height: 0; padding: 0 26px 0 12px; }
.sec-title { margin: 0; height: 34px; padding-top: 11px; font-size: 16px; line-height: 22px; font-weight: 400; color: #333; border-bottom: 1px solid #e5e5e5; }
.sec-title-2 { height: 33px; padding-top: 10px; margin-top: 11px; }

.grid { border-collapse: separate; border-spacing: 0; table-layout: fixed; width: 1153px; font-size: 11px; color: #777; }
.grid th { height: 44px; padding: 14px 6px 0; text-align: left; font-weight: 700; color: #666; border-bottom: 2px solid #e0e0e0; vertical-align: middle; }
.grid td { padding: 6px; border-bottom: 1px solid #e5e5e5; height: 39px; vertical-align: middle; }
.grid .no-line { border-bottom: 0; }
.grid .add-row td { border-bottom: 0; height: 32px; padding-bottom: 0; }
.grid .last-row td:not(:first-child) { border-bottom-color: transparent; }
.c-name { width: 384px; }
.c-s { width: 96px; }
.c-store { width: 288px; }
.num { padding-bottom: 8px !important; }
.rm { display: block; margin-left: 5px; }

.field {
  display: block; width: 100%; height: 26px; margin: 0; padding: 0 8.500px; border: 1px solid #ccc; border-radius: 0;
  background: #fff; font: 11px "Liberation Sans", sans-serif; color: #555; outline: 0;
}
.field:disabled { background: #eee; color: #aaa; -webkit-text-fill-color: #aaa; opacity: 1; }

.grid-semi th { border-bottom: 0; padding-top: 12px; background: linear-gradient(#e0e0e0, #e0e0e0) 0 calc(100% - 1px) / 100% 1px no-repeat; }
.grid-semi th:first-child { background: linear-gradient(#e0e0e0, #e0e0e0) 0 100% / 100% 2px no-repeat; }
.d-name { width: 383px; }
.d-qty { width: 93px; }
.d-unit { width: 195px; }
.d-net { width: 209px; }

.chat {
  position: absolute; left: 1358px; top: 609px; width: 45px; height: 45px; padding: 0; border: 0; border-radius: 50%;
  background: #e63c4b; box-shadow: 0 2px 12px rgba(0,0,0,.18); display: flex; align-items: center; justify-content: center;
}
.chat svg { display: block; }

/* dock */
.dock {
  margin: auto 0 6px 35px; width: 1369px; height: 52px; flex: none; padding: 7px 0 0 7px;
  display: flex; align-items: flex-start; gap: 10.180px; position: relative;
  background: rgba(110, 40, 50, .42); border: 1px solid rgba(255,255,255,.16); border-radius: 15px;
}
.dock-item { position: relative; width: 34px; height: 34px; flex: none; }
.dock-item > svg { display: block; width: 100%; height: 100%; overflow: visible; }
.has-dot::after { content: ""; position: absolute; left: 15px; bottom: -9px; width: 4px; height: 4px; border-radius: 50%; background: #c9a0a8; }
.dock-badge .badge { position: absolute; right: -5px; top: -4px; width: 15px; height: 15px; border-radius: 50%; background: #f01c24; color: #fff; font: 400 9px/15px "Liberation Sans", sans-serif; text-align: center; }
.dock-sep { width: 1px; height: 38px; flex: none; background: rgba(255,255,255,.28); margin: -2px 3px 0 6px; }
.dock-sep2 { margin: -2px 4px 0 4px; }
.dock-td { width: 42px; height: 42px; margin: -4px -4px 0; }
.dock-td.has-dot::after { left: 19px; bottom: -5px; }
.dock-thumb { width: 40px; height: 36px; margin: 0 -3px; }
.dock-trash { width: 34px; height: 42px; margin-top: -4px; }
.cal-mon { font: 700 7px Inter, "Liberation Sans", sans-serif; fill: #fff; text-anchor: middle; }
.cal-day { font: 300 21px Inter, "Liberation Sans", sans-serif; fill: #222; text-anchor: middle; }
.tv { font: 500 16px Inter, "Liberation Sans", sans-serif; fill: #fff; text-anchor: middle; }
.skype { font: 700 24px "Liberation Sans", sans-serif; fill: #fff; text-anchor: middle; }
.td { font: 500 25px Inter, "Liberation Sans", sans-serif; fill: #132a4f; text-anchor: middle; letter-spacing: -1.500px; }
.td-small { font: 500 9px Inter, "Liberation Sans", sans-serif; fill: #132a4f; text-anchor: middle; }
```
